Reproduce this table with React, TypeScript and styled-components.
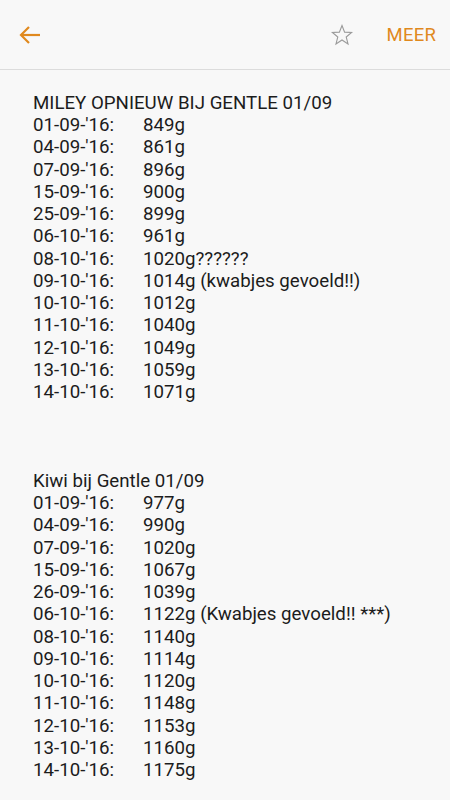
import React from "react";
import styled, { createGlobalStyle } from "styled-components";

const Global = createGlobalStyle`
  html, body { margin: 0; padding: 0; background: #f8f8f8; }
  body { font-family: Roboto, "Noto Sans", sans-serif; }
`;

const Page = styled.div`
  width: 450px;
  min-height: 800px;
  background: #f8f8f8;
  color: #1c1c1c;
`;

const Header = styled.header`
  height: 70px;
  display: flex;
  align-items: center;
  border-bottom: 1px solid #dcdcdc;
  box-sizing: border-box;
  padding: 0 14px 0 18px;
`;

const IconButton = styled.button`
  border: none;
  background: none;
  padding: 0;
  display: flex;
  align-items: center;
  justify-content: center;
  cursor: pointer;
`;

const Spacer = styled.div`
  flex: 1;
`;

const MoreButton = styled.button`
  border: none;
  background: none;
  padding: 0;
  margin-left: 33px;
  font-family: Roboto, sans-serif;
  font-size: 18.5px;
  color: #e0891e;
  letter-spacing: 0.2px;
  cursor: pointer;
`;

const Body = styled.main`
  padding: 22px 0 0 33px;
  font-size: 18.7px;
  line-height: 22.23px;
`;

const Title = styled.div``;

const Section = styled.section<{ $gap?: number }>`
  margin-bottom: ${(p) => p.$gap ?? 0}px;
`;

const Row = styled.div`
  display: grid;
  grid-template-columns: 110px auto;
  white-space: pre;
`;

type Entry = [string, string];

const miley: Entry[] = [
  ["01-09-'16:", "849g"],
  ["04-09-'16:", "861g"],
  ["07-09-'16:", "896g"],
  ["15-09-'16:", "900g"],
  ["25-09-'16:", "899g"],
  ["06-10-'16:", "961g"],
  ["08-10-'16:", "1020g??????"],
  ["09-10-'16:", "1014g (kwabjes gevoeld!!)"],
  ["10-10-'16:", "1012g"],
  ["11-10-'16:", "1040g"],
  ["12-10-'16:", "1049g"],
  ["13-10-'16:", "1059g"],
  ["14-10-'16:", "1071g"],
];

const kiwi: Entry[] = [
  ["01-09-'16:", "977g"],
  ["04-09-'16:", "990g"],
  ["07-09-'16:", "1020g"],
  ["15-09-'16:", "1067g"],
  ["26-09-'16:", "1039g"],
  ["06-10-'16:", "1122g (Kwabjes gevoeld!! ***)"],
  ["08-10-'16:", "1140g"],
  ["09-10-'16:", "1114g"],
  ["10-10-'16:", "1120g"],
  ["11-10-'16:", "1148g"],
  ["12-10-'16:", "1153g"],
  ["13-10-'16:", "1160g"],
  ["14-10-'16:", "1175g"],
];

const Back = () => (
  <svg width="24" height="24" viewBox="0 0 24 24" fill="none" stroke="#e0891e" strokeWidth="2.2" strokeLinecap="butt">
    <path d="M22 12H3" />
    <path d="M11 4l-8 8 8 8" />
  </svg>
);

const Star = () => (
  <svg width="24" height="24" viewBox="0 0 24 24" fill="none" stroke="#9a9a9a" strokeWidth="1.1" strokeLinejoin="miter">
    <path d="M12 2.5l2.6 6.6 7 .4-5.4 4.5 1.8 6.9L12 17l-6 3.9 1.8-6.9L2.4 9.5l7-.4z" />
  </svg>
);

export default function App() {
  return (
    <Page>
      <Global />
      <Header>
        <IconButton aria-label="Terug">
          <Back />
        </IconButton>
        <Spacer />
        <IconButton aria-label="Favoriet">
          <Star />
        </IconButton>
        <MoreButton>MEER</MoreButton>
      </Header>
      <Body>
        <Section $gap={66.7}>
          <Title>MILEY OPNIEUW BIJ GENTLE 01/09</Title>
          {miley.map(([d, v]) => (
            <Row key={d}>
              <span>{d}</span>
              <span>{v}</span>
            </Row>
          ))}
        </Section>
        <Section>
          <Title>Kiwi bij Gentle 01/09</Title>
          {kiwi.map(([d, v]) => (
            <Row key={d}>
              <span>{d}</span>
              <span>{v}</span>
            </Row>
          ))}
        </Section>
      </Body>
    </Page>
  );
}
